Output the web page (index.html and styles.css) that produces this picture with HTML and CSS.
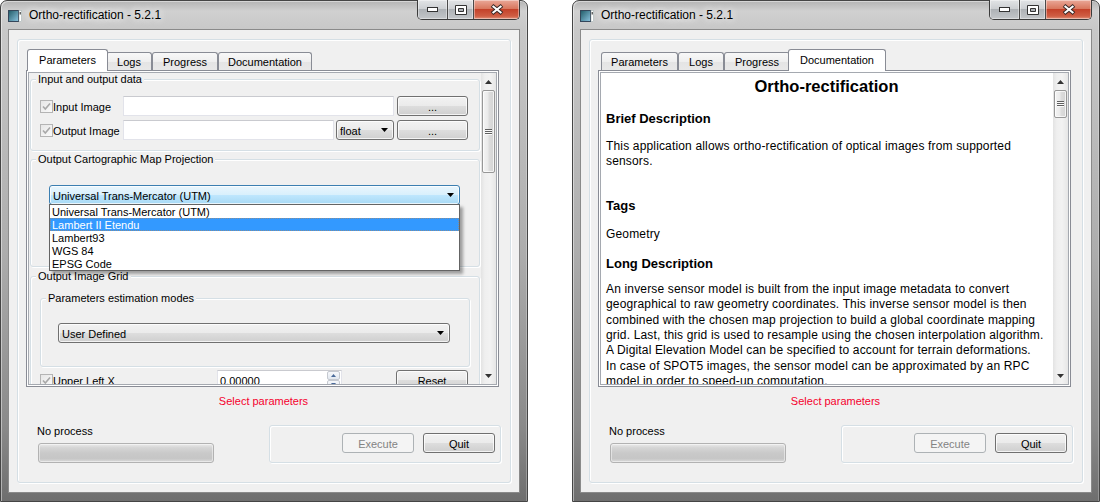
FILE: index.html
```html
<!DOCTYPE html>
<html>
<head>
<meta charset="utf-8">
<title>Ortho-rectification</title>
<link rel="stylesheet" href="styles.css">
</head>
<body>
<div class="desktop">

  <!-- LEFT WINDOW : Parameters tab -->
  <div class="window">
    <div class="titlebar">
      <svg class="appicon" viewBox="0 0 14 12"><defs><linearGradient id="ig1" x1="0" y1="0" x2="1" y2="1"><stop offset="0" stop-color="#1f5a66"/><stop offset="1" stop-color="#8cc4e0"/></linearGradient></defs><rect x="0.5" y="0.5" width="10" height="11" fill="url(#ig1)" stroke="#34465a"/><rect x="11" y="0.5" width="2.5" height="11" fill="#fff" stroke="#9aa" stroke-width="0.5"/><rect x="11.7" y="2" width="1" height="2.5" fill="#222"/></svg>
      <span class="title">Ortho-rectification - 5.2.1</span>
      <div class="caption">
        <div class="cbtn min"><svg width="11" height="5" viewBox="0 0 11 5"><rect x="0.5" y="0.5" width="10" height="4" fill="#fff" stroke="#333"/></svg></div>
        <div class="cbtn max"><svg width="12" height="10" viewBox="0 0 12 10"><path d="M0.5 0.5h11v9h-11z M3.5 3.5v3h5v-3z" fill="#fff" fill-rule="evenodd" stroke="#333"/></svg></div>
        <div class="cbtn close"><svg width="14" height="11" viewBox="0 0 14 11"><path d="M2 1.5L12 9.5M12 1.5L2 9.5" stroke="#3a2a28" stroke-width="4"/><path d="M2.6 2L11.4 9M11.4 2L2.6 9" stroke="#fff" stroke-width="2"/></svg></div>
      </div>
    </div>
    <div class="client">
      <div class="mainframe">
        <div class="tabwidget">
          <div class="tabbar">
            <div class="tab sel w-par">Parameters</div>
            <div class="tab w-log">Logs</div>
            <div class="tab w-pro">Progress</div>
            <div class="tab w-doc">Documentation</div>
          </div>
          <div class="pane">
            <div class="scrollarea">
              <div class="content params">
                <div class="group g1">
                  <div class="gtitle">Input and output data</div>
                  <div class="gbody io">
                    <div class="chk"><span class="cb"><svg width="11" height="11" viewBox="0 0 11 11"><path d="M2 5.5L4.3 8L9 2.5" fill="none" stroke="#a8a8a8" stroke-width="1.6"/></svg></span>Input Image</div>
                    <div class="edit"></div>
                    <div class="btn">...</div>
                    <div class="chk"><span class="cb"><svg width="11" height="11" viewBox="0 0 11 11"><path d="M2 5.5L4.3 8L9 2.5" fill="none" stroke="#a8a8a8" stroke-width="1.6"/></svg></span>Output Image</div>
                    <div class="pair">
                      <div class="edit"></div>
                      <div class="combo w-float">float<svg class="arrow" width="7" height="4" viewBox="0 0 7 4"><path d="M0 0H7L3.5 4z" fill="#000"/></svg></div>
                    </div>
                    <div class="btn">...</div>
                  </div>
                </div>

                <div class="group g2">
                  <div class="gtitle">Output Cartographic Map Projection</div>
                  <div class="gbody">
                    <div class="combowrap">
                      <div class="combo focus">Universal Trans-Mercator (UTM)<svg class="arrow" width="7" height="4" viewBox="0 0 7 4"><path d="M0 0H7L3.5 4z" fill="#000"/></svg></div>
                      <div class="popup">
                        <div class="item">Universal Trans-Mercator (UTM)</div>
                        <div class="item sel">Lambert II Etendu</div>
                        <div class="item">Lambert93</div>
                        <div class="item">WGS 84</div>
                        <div class="item">EPSG Code</div>
                      </div>
                    </div>
                  </div>
                </div>

                <div class="group g3">
                  <div class="gtitle">Output Image Grid</div>
                  <div class="gbody">
                    <div class="group nested">
                      <div class="gtitle">Parameters estimation modes</div>
                      <div class="gbody">
                        <div class="combo">User Defined<svg class="arrow" width="7" height="4" viewBox="0 0 7 4"><path d="M0 0H7L3.5 4z" fill="#000"/></svg></div>
                      </div>
                    </div>
                    <div class="ulx">
                      <div class="chk w-ulx"><span class="cb"><svg width="11" height="11" viewBox="0 0 11 11"><path d="M2 5.5L4.3 8L9 2.5" fill="none" stroke="#a8a8a8" stroke-width="1.6"/></svg></span>Upper Left X</div>
                      <div class="spin"><span class="val">0.00000</span><div class="spinbtns"><div class="sb"><svg width="5" height="3" viewBox="0 0 5 3"><path d="M0 3H5L2.5 0z" fill="#4a6a9a"/></svg></div><div class="sb"><svg width="5" height="3" viewBox="0 0 5 3"><path d="M0 0H5L2.5 3z" fill="#4a6a9a"/></svg></div></div></div>
                      <div class="btn w-reset">Reset</div>
                    </div>
                  </div>
                </div>
              </div>
              <div class="vscroll">
                <div class="sarrow"><svg width="7" height="4" viewBox="0 0 7 4"><path d="M0 4H7L3.5 0z" fill="#333"/></svg></div>
                <div class="thumb t-params"><span class="grip"></span></div>
                <div class="track"></div>
                <div class="sarrow"><svg width="7" height="4" viewBox="0 0 7 4"><path d="M0 0H7L3.5 4z" fill="#333"/></svg></div>
              </div>
            </div>
          </div>
        </div>
        <div class="status">Select parameters</div>
        <div class="bottomrow">
          <div class="progcol">
            <div class="proglabel">No process</div>
            <div class="progress"></div>
          </div>
          <div class="btngroup">
            <div class="btn disabled">Execute</div>
            <div class="btn">Quit</div>
          </div>
        </div>
      </div>
    </div>
  </div>

  <!-- RIGHT WINDOW : Documentation tab -->
  <div class="window">
    <div class="titlebar">
      <svg class="appicon" viewBox="0 0 14 12"><defs><linearGradient id="ig2" x1="0" y1="0" x2="1" y2="1"><stop offset="0" stop-color="#1f5a66"/><stop offset="1" stop-color="#8cc4e0"/></linearGradient></defs><rect x="0.5" y="0.5" width="10" height="11" fill="url(#ig2)" stroke="#34465a"/><rect x="11" y="0.5" width="2.5" height="11" fill="#fff" stroke="#9aa" stroke-width="0.5"/><rect x="11.7" y="2" width="1" height="2.5" fill="#222"/></svg>
      <span class="title">Ortho-rectification - 5.2.1</span>
      <div class="caption">
        <div class="cbtn min"><svg width="11" height="5" viewBox="0 0 11 5"><rect x="0.5" y="0.5" width="10" height="4" fill="#fff" stroke="#333"/></svg></div>
        <div class="cbtn max"><svg width="12" height="10" viewBox="0 0 12 10"><path d="M0.5 0.5h11v9h-11z M3.5 3.5v3h5v-3z" fill="#fff" fill-rule="evenodd" stroke="#333"/></svg></div>
        <div class="cbtn close"><svg width="14" height="11" viewBox="0 0 14 11"><path d="M2 1.5L12 9.5M12 1.5L2 9.5" stroke="#3a2a28" stroke-width="4"/><path d="M2.6 2L11.4 9M11.4 2L2.6 9" stroke="#fff" stroke-width="2"/></svg></div>
      </div>
    </div>
    <div class="client">
      <div class="mainframe">
        <div class="tabwidget">
          <div class="tabbar">
            <div class="tab w-par">Parameters</div>
            <div class="tab w-log">Logs</div>
            <div class="tab w-pro">Progress</div>
            <div class="tab sel w-doc">Documentation</div>
          </div>
          <div class="pane">
            <div class="scrollarea">
              <div class="content doc">
                <div class="dtitle">Ortho-rectification</div>
                <div class="dh h-brief">Brief Description</div>
                <div class="dp p-brief">This application allows ortho-rectification of optical images from supported<br>sensors.</div>
                <div class="dh h-tags">Tags</div>
                <div class="dp p-tags">Geometry</div>
                <div class="dh h-long">Long Description</div>
                <div class="dp p-long">An inverse sensor model is built from the input image metadata to convert<br>geographical to raw geometry coordinates. This inverse sensor model is then<br>combined with the chosen map projection to build a global coordinate mapping<br>grid. Last, this grid is used to resample using the chosen interpolation algorithm.<br>A Digital Elevation Model can be specified to account for terrain deformations.<br>In case of SPOT5 images, the sensor model can be approximated by an RPC<br>model in order to speed-up computation.</div>
              </div>
              <div class="vscroll">
                <div class="sarrow"><svg width="7" height="4" viewBox="0 0 7 4"><path d="M0 4H7L3.5 0z" fill="#333"/></svg></div>
                <div class="thumb t-doc"><span class="grip"></span></div>
                <div class="track"></div>
                <div class="sarrow"><svg width="7" height="4" viewBox="0 0 7 4"><path d="M0 0H7L3.5 4z" fill="#333"/></svg></div>
              </div>
            </div>
          </div>
        </div>
        <div class="status">Select parameters</div>
        <div class="bottomrow">
          <div class="progcol">
            <div class="proglabel">No process</div>
            <div class="progress"></div>
          </div>
          <div class="btngroup">
            <div class="btn disabled">Execute</div>
            <div class="btn">Quit</div>
          </div>
        </div>
      </div>
    </div>
  </div>

</div>
</body>
</html>
```

FILE: styles.css
```css
* { box-sizing: border-box; }
html, body { margin: 0; padding: 0; background: #fff; }
body {
  width: 1100px; height: 502px; overflow: hidden;
  font-family: "Liberation Sans", Arial, sans-serif;
  font-size: 11px; line-height: 13px; color: #000;
}
.desktop { display: flex; gap: 44px; }

/* ---------- window frame ---------- */
.window {
  width: 528px; height: 502px;
  display: flex; flex-direction: column;
  padding: 0 7px 8px;
  border: 1px solid #454545;
  border-radius: 7px 7px 0 0;
  background: linear-gradient(180deg, #b4b4b4 0, #d0d0d0 10px, #c8c8c8 28px, #adadad 50%, #8a8a8a 85%, #6e6e6e 100%);
  box-shadow: inset 1px 1px 0 rgba(255,255,255,.45), inset -1px 0 0 rgba(255,255,255,.25);
}
.titlebar { height: 28px; flex: none; display: flex; align-items: center; }
.appicon { width: 14px; height: 12px; flex: none; margin-top: 1px; }
.title {
  margin-left: 7px; font-size: 12px; line-height: 14px;
  text-shadow: 0 0 6px #f4f4f4, 0 0 10px #f0f0f0;
}
.caption {
  margin-left: auto; align-self: flex-start; margin-top: -1px;
  display: flex; height: 20px;
  border: 1px solid #3b3b3b; border-top: none;
  border-radius: 0 0 5px 5px; overflow: hidden;
}
.cbtn {
  height: 19px; display: flex; align-items: center; justify-content: center;
  box-shadow: inset 0 0 0 1px rgba(255,255,255,.4);
}
.cbtn.min { width: 29px; background: linear-gradient(#e2e4e6, #cdd0d3 45%, #aeb2b6 50%, #c3c6c9); }
.cbtn.max { width: 26px; border-left: 1px solid #4a4a4a; background: linear-gradient(#e2e4e6, #cdd0d3 45%, #aeb2b6 50%, #c3c6c9); }
.cbtn.close { width: 46px; border-left: 1px solid #4a4a4a; background: linear-gradient(#eaa898, #d9785f 45%, #c4422a 50%, #cf5e44 85%, #e2927a); }

.client {
  flex: 1; display: flex;
  background: #f0f0f0;
  border: 1px solid #8a8a8a;
  padding: 9px 8px 9px 8px;
}
.mainframe {
  flex: 1; display: flex; flex-direction: column;
  border: 1px solid #d5dfe5; border-radius: 3px;
  box-shadow: inset 1px 1px 0 #fff, 1px 1px 0 #fff;
  padding: 9px 9px 19px 8px;
}

/* ---------- tabs ---------- */
.tabwidget { margin-right: 2px; }
.tabbar { height: 21px; display: flex; align-items: flex-end; padding-left: 3px; position: relative; z-index: 1; }
.tab {
  box-sizing: content-box;
  height: 17px; line-height: 18px; text-align: center;
  border: 1px solid #898c95; border-bottom: none;
  border-radius: 3px 3px 0 0;
  background: linear-gradient(#f8f8f8, #efefef 50%, #e4e4e4 51%, #e8e8e8);
}
.w-par { width: 75px; }
.w-log { width: 44px; }
.w-pro { width: 64px; }
.w-doc { width: 92px; }
.tab.sel {
  height: 21px; line-height: 20px;
  margin: 0 -2px -1px; padding: 0 2px;
  background: #fff; position: relative; z-index: 2;
}
.pane {
  height: 317px; display: flex;
  border: 1px solid #898c95; background: #fff; padding: 1px;
}
.scrollarea { flex: 1; display: flex; border: 1px solid #a5a9b0; min-width: 0; }
.content { flex: 1; min-width: 0; overflow: hidden; background: #f0f0f0; padding: 0 1px; position: relative; }

/* ---------- group boxes ---------- */
.group {
  border: 1px solid #d5dfe5; border-radius: 3px;
  box-shadow: inset 1px 1px 0 #fff, 1px 1px 0 #fff;
}
.gtitle {
  display: table; margin: -7px 0 0 5px; padding: 0 2px;
  background: #f0f0f0; line-height: 12px; white-space: nowrap;
}
.g1 { margin-top: 6px; }
.g1 .gbody { padding: 11px 11px 10px 9px; }
.io { display: grid; grid-template-columns: 80px 1fr 71px; column-gap: 3px; row-gap: 4px; }
.g2 { margin-top: 8px; }
.g2 .gbody { padding: 20px 19px 61px 18px; }
.g3 { margin-top: 9px; }
.g3 > .gbody { padding: 16px 9px 20px 9px; }
.nested > .gbody { padding: 19px 19px 23px 17px; }

/* ---------- widgets ---------- */
.chk { display: flex; align-items: center; height: 20px; padding-top: 2px; white-space: nowrap; }
.cb {
  width: 13px; height: 13px; flex: none; margin-top: -2px;
  border: 1px solid #b4b4b4;
  background: linear-gradient(135deg, #e6e6e6, #fafafa);
  display: flex; align-items: center; justify-content: center;
}
.edit {
  height: 20px; background: #fff;
  border: 1px solid #e2e3ea; border-top-color: #c9cacf;
}
.pair { display: flex; gap: 2px; }
.pair .edit { flex: 1; }
.btn {
  height: 20px; display: flex; align-items: center; justify-content: center;
  padding-top: 2px;
  border: 1px solid #707070; border-radius: 3px;
  background: linear-gradient(#f2f2f2, #ebebeb 48%, #dddddd 52%, #cfcfcf);
  box-shadow: inset 0 0 0 1px rgba(255,255,255,.75);
}
.btn.disabled { border-color: #adb2b5; background: #f4f4f4; color: #838383; box-shadow: none; }
.combo {
  height: 20px; display: flex; align-items: center;
  padding: 2px 0 0 3px; white-space: nowrap;
  border: 1px solid #707070; border-radius: 3px;
  background: linear-gradient(#f2f2f2, #ebebeb 48%, #dddddd 52%, #cfcfcf);
  box-shadow: inset 0 0 0 1px rgba(255,255,255,.75);
}
.combo .arrow { margin-left: auto; margin-right: 5px; margin-top: -2px; flex: none; }
.w-float { width: 58px; }
.combo.focus {
  border-color: #3c7fb1;
  background: linear-gradient(#eaf6fd, #d9f0fc 48%, #bee6fd 52%, #a7d9f5);
}
.combowrap { position: relative; }
.popup {
  position: absolute; left: 0; right: 0; top: 19px; z-index: 5;
  background: #fff; border: 1px solid #646464;
  box-shadow: 3px 3px 3px rgba(0,0,0,.35);
}
.item { height: 13px; line-height: 14px; padding-left: 2px; white-space: nowrap; }
.item.sel { background: #3399ff; color: #fff; outline: 1px dotted rgba(200,130,60,.55); outline-offset: -1px; }

.ulx { display: flex; margin-top: 3px; margin-right: 2px; height: 20px; }
.w-ulx { width: 177px; }
.spin {
  width: 125px; height: 20px; display: flex; align-items: center;
  background: #fff; border: 1px solid #e2e3ea; border-top-color: #c9cacf;
  padding-left: 2px;
}
.spin .val { flex: 1; padding-top: 2px; }
.spinbtns { display: flex; flex-direction: column; width: 13px; height: 18px; margin-right: 1px; }
.sb {
  flex: 1; display: flex; align-items: center; justify-content: center;
  border: 1px solid #c5c9d0; border-radius: 2px;
  background: linear-gradient(#f6f8fb, #e2e8f0);
}
.w-reset { width: 72px; margin-left: auto; }

/* ---------- scrollbar ---------- */
.vscroll {
  width: 15px; flex: none; display: flex; flex-direction: column;
  background: linear-gradient(to right, #e3e3e3, #efefef 25%, #f2f2f2 60%, #e6e6e6);
}
.sarrow { height: 17px; flex: none; display: flex; align-items: center; justify-content: center; }
.thumb {
  flex: none; margin: 0 1px;
  border: 1px solid #979797; border-radius: 2px;
  background: linear-gradient(to right, #f4f4f4, #eaeaea 45%, #dcdcdc 55%, #d4d4d4);
  box-shadow: inset 0 0 0 1px rgba(255,255,255,.7);
  display: flex; align-items: center; justify-content: center;
}
.t-params { height: 83px; }
.t-doc { height: 28px; }
.grip {
  width: 7px; height: 6px;
  background: repeating-linear-gradient(#5f5f5f 0 1px, #fafafa 1px 2px);
}
.track { flex: 1; }

/* ---------- bottom area ---------- */
.status { margin-top: 8px; text-align: center; color: #f5002d; line-height: 13px; }
.bottomrow { display: flex; justify-content: space-between; margin-top: 16px; padding-left: 12px; }
.progcol { width: 176px; }
.proglabel { margin-left: -1px; padding-top: 1px; line-height: 13px; }
.progress {
  margin-top: 5px; height: 20px;
  border: 1px solid #b2b2b2; border-radius: 3px;
  background: linear-gradient(#ebebeb, #d6d6d6 20%, #c9c9c9 50%, #c6c6c6 80%, #dadada);
  box-shadow: inset 0 0 0 1px rgba(255,255,255,.45);
}
.btngroup {
  margin-top: 1px; width: 232px; height: 38px;
  border: 1px solid #d5dfe5; border-radius: 3px;
  box-shadow: inset 1px 1px 0 #fff, 1px 1px 0 #fff;
  display: flex; justify-content: flex-end; gap: 9px;
  padding: 7px 5px 0 0;
}
.btngroup .btn { width: 72px; }

/* ---------- documentation ---------- */
.doc { background: #fff; padding: 0 6px 0 5px; font-size: 12px; white-space: nowrap; }
.dp { line-height: 15px; letter-spacing: 0.16px; }
.dtitle { margin-top: 3px; text-align: center; font-weight: bold; font-size: 16.5px; line-height: 20px; }
.dh { font-weight: bold; font-size: 13px; line-height: 16px; }
.h-brief { margin-top: 15px; }
.p-brief { margin-top: 12px; }
.h-tags { margin-top: 29px; }
.p-tags { margin-top: 13px; }
.h-long { margin-top: 14px; }
.p-long { margin-top: 10px; line-height: 15.33px; }
```
